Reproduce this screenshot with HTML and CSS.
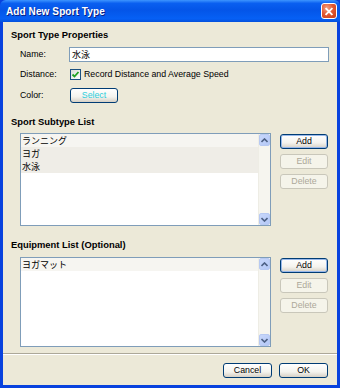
FILE: index.html
```html
<!DOCTYPE html>
<html>
<head>
<meta charset="utf-8">
<link rel="stylesheet" href="styles.css">
</head>
<body>
<div class="window">
  <div class="titlebar">
    <span class="title">Add New Sport Type</span>
    <span class="close">
      <svg width="15" height="15" viewBox="0 0 15 15">
        <path d="M4.5 4.5 L10.5 10.5 M10.5 4.5 L4.5 10.5" stroke="#fff" stroke-width="2" stroke-linecap="square"/>
      </svg>
    </span>
  </div>
  <div class="client">
    <div class="heading h1">Sport Type Properties</div>
    <div class="row name-row">
      <span class="label">Name:</span>
      <div class="textbox">水泳</div>
    </div>
    <div class="row dist-row">
      <span class="label">Distance:</span>
      <span class="checkbox">
        <svg width="9" height="9" viewBox="0 0 9 9"><path d="M1.5 4.5 L3.5 6.5 L7.5 2" fill="none" stroke="#21a121" stroke-width="1.8"/></svg>
      </span>
      <span class="cbtext">Record Distance and Average Speed</span>
    </div>
    <div class="row color-row">
      <span class="label">Color:</span>
      <span class="btn select-btn">Select</span>
    </div>

    <div class="heading h2">Sport Subtype List</div>
    <div class="listsection sub">
      <div class="listbox lb1">
        <div class="items">
          <div class="item i1">ランニング</div>
          <div class="item i2">ヨガ</div>
          <div class="item i2">水泳</div>
        </div>
        <div class="scrollbar">
          <span class="arrow"><svg width="7" height="5" viewBox="0 0 7 5"><path d="M0.5 4 L3.5 1 L6.5 4" fill="none" stroke="#4d6185" stroke-width="1.6"/></svg></span>
          <span class="track"></span>
          <span class="arrow"><svg width="7" height="5" viewBox="0 0 7 5"><path d="M0.5 1 L3.5 4 L6.5 1" fill="none" stroke="#4d6185" stroke-width="1.6"/></svg></span>
        </div>
      </div>
      <div class="buttons">
        <span class="btn default">Add</span>
        <span class="btn disabled">Edit</span>
        <span class="btn disabled">Delete</span>
      </div>
    </div>

    <div class="heading h3">Equipment List (Optional)</div>
    <div class="listsection equip">
      <div class="listbox lb2">
        <div class="items">
          <div class="item i1">ヨガマット</div>
        </div>
        <div class="scrollbar">
          <span class="arrow"><svg width="7" height="5" viewBox="0 0 7 5"><path d="M0.5 4 L3.5 1 L6.5 4" fill="none" stroke="#4d6185" stroke-width="1.6"/></svg></span>
          <span class="track"></span>
          <span class="arrow"><svg width="7" height="5" viewBox="0 0 7 5"><path d="M0.5 1 L3.5 4 L6.5 1" fill="none" stroke="#4d6185" stroke-width="1.6"/></svg></span>
        </div>
      </div>
      <div class="buttons">
        <span class="btn default">Add</span>
        <span class="btn disabled">Edit</span>
        <span class="btn disabled">Delete</span>
      </div>
    </div>

    <div class="separator"></div>
    <div class="footer">
      <span class="btn foot">Cancel</span>
      <span class="btn foot">OK</span>
    </div>
  </div>
</div>
</body>
</html>
```
FILE: styles.css
```css
* { box-sizing: border-box; }
html, body { margin: 0; padding: 0; background: #ece9d8; }
body {
  font-family: "Liberation Sans", "Noto Sans CJK JP", sans-serif;
  font-size: 8.8px;
  line-height: 13px;
  color: #000;
}
.window {
  width: 340px;
  height: 388px;
  display: flex;
  flex-direction: column;
  background: #0842de;
}
.titlebar {
  height: 22px;
  flex: none;
  display: flex;
  align-items: center;
  justify-content: space-between;
  padding: 0 3px 0 6px;
  background: linear-gradient(to bottom, #3d95ff 0%, #0a5ff0 15%, #0455e8 45%, #0660f5 85%, #0450dc 100%);
  border-radius: 6px 6px 0 0;
}
.title {
  color: #fff;
  font-family: "Liberation Sans", sans-serif;
  font-weight: bold;
  font-size: 10px;
  letter-spacing: 0.1px;
  text-shadow: 1px 1px 0 #0a1e80;
}
.close {
  width: 16px;
  height: 16px;
  border: 1px solid #fff;
  border-radius: 3px;
  background: radial-gradient(circle at 35% 30%, #f3a282 0%, #e25a34 45%, #c63c16 100%);
  display: flex;
  align-items: center;
  justify-content: center;
}
.client {
  flex: 1;
  margin: 0 3px 3px 3px;
  background: #ece9d8;
  padding: 0 8px;
  display: flex;
  flex-direction: column;
}
.heading {
  font-weight: bold;
  font-size: 9.4px;
  height: 13px;
  line-height: 13px;
}
.h1 { margin-top: 6px; }
.row {
  display: flex;
  align-items: center;
  height: 15px;
}
.label {
  width: 58px;
  flex: none;
  padding-left: 9px;
}
.name-row { margin-top: 6px; }
.textbox {
  width: 260px;
  height: 15px;
  background: #fff;
  border: 1px solid #7f9db9;
  padding-left: 2px;
  line-height: 13px;
  font-family: "Noto Sans CJK JP", sans-serif;
  font-size: 9px;
}
.dist-row { margin-top: 5px; }
.checkbox {
  margin-left: 1px;
  width: 11px;
  height: 11px;
  border: 1px solid #1c5180;
  background: linear-gradient(135deg, #dcdcd7, #fff);
  display: flex;
  align-items: center;
  justify-content: center;
}
.cbtext { margin-left: 3px; }
.color-row { margin-top: 6px; }
.btn {
  display: flex;
  align-items: center;
  justify-content: center;
  height: 15px;
  border: 1px solid #003c74;
  border-radius: 3px;
  background: linear-gradient(to bottom, #ffffff 0%, #f4f3ee 60%, #d6d0c5 100%);
  color: #000;
  line-height: 13px;
}
.select-btn {
  margin-left: 1px;
  width: 48px;
  color: #2ccfdc;
}
.h2 { margin-top: 12px; }
.listsection {
  display: flex;
  margin-left: 9px;
  margin-top: 5px;
}
.listbox {
  width: 251px;
  border: 1px solid #7f9db9;
  background: #fff;
  display: flex;
}
.lb1 { height: 93px; }
.lb2 { height: 90px; }
.items { flex: 1; }
.item {
  height: 13px;
  line-height: 13px;
  padding-left: 1px;
  font-family: "Noto Sans CJK JP", sans-serif;
  font-size: 9px;
}
.i1 { background: #f6f5f1; }
.i2 { background: #efede7; }
.scrollbar {
  width: 12px;
  display: flex;
  flex-direction: column;
  background: #f6f5ef;
  border-left: 1px solid #eeede5;
}
.arrow {
  height: 12px;
  display: flex;
  align-items: center;
  justify-content: center;
  background: linear-gradient(135deg, #c8d7fb, #b4c8f6);
  border: 1px solid #b7c9f2;
  border-radius: 2px;
}
.track { flex: 1; }
.buttons {
  display: flex;
  flex-direction: column;
  gap: 5px;
  margin-left: 9px;
  padding-top: 1px;
}
.buttons .btn { width: 48px; }
.default {
  border: 1px solid #003c74;
  box-shadow: inset 0 0 0 1px #98b8ea;
}
.disabled {
  border-color: #c9c7ba;
  background: #f5f4ea;
  color: #aca899;
}
.h3 { margin-top: 12px; }
.equip { margin-top: 6px; }
.separator {
  margin: 6px -8px 0 -8px;
  height: 2px;
  flex: none;
  border-top: 1px solid #aca899;
  border-bottom: 1px solid #fff;
}
.footer {
  display: flex;
  justify-content: flex-end;
  gap: 7px;
  margin-top: 8px;
  padding-right: 1px;
}
.foot { width: 49px; height: 15px; }
```
